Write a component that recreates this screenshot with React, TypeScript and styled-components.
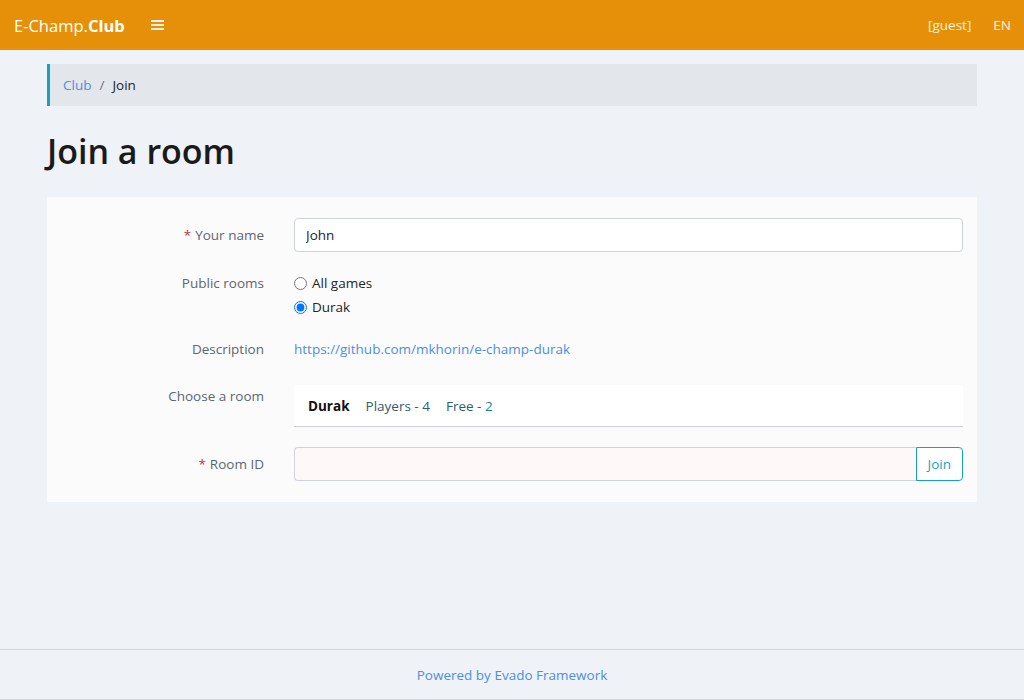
import React from "react";
import styled, { createGlobalStyle } from "styled-components";

const Global = createGlobalStyle`
  html, body { margin: 0; padding: 0; }
  body {
    background: #eff2f7;
    font-family: "Open Sans", "Noto Sans", "Liberation Sans", sans-serif;
    font-size: 13.5px;
    color: #212529;
  }
  * { box-sizing: border-box; }
`;

const Page = styled.div`
  min-height: 700px;
  display: flex;
  flex-direction: column;
`;

const NavBar = styled.header`
  height: 50px;
  background: #e69009;
  display: flex;
  align-items: center;
  padding: 0 13px 0 14px;
  color: #fff;
`;

const Brand = styled.div`
  font-size: 16.5px;
  color: #fff;
  b { font-weight: 700; }
`;

const Burger = styled.div`
  margin-left: 26px;
  width: 13px;
  display: flex;
  flex-direction: column;
  gap: 2px;
  span { display: block; height: 2px; background: #f4efe6; }
`;

const NavRight = styled.div`
  margin-left: auto;
  display: flex;
  gap: 22px;
  font-size: 13.5px;
  color: #fbf2e3;
`;

const Main = styled.main`
  flex: 1;
  padding: 14px 47px 0;
`;

const Breadcrumb = styled.nav`
  height: 42px;
  background: #e3e6ea;
  border-left: 3px solid #17a2b8;
  display: flex;
  align-items: center;
  padding-left: 13px;
  font-size: 13.5px;
  a { color: #4a90e2; text-decoration: none; }
  span.sep { color: #6c757d; margin: 0 8px; }
`;

const Title = styled.h1`
  margin: 24px 0 25px;
  font-size: 34px;
  font-weight: 600;
  line-height: 42px;
  color: #1a1a1a;
`;

const Panel = styled.section`
  background: #fbfbfc;
  padding: 21px 14px 21px 14px;
`;

const Row = styled.div<{ $mb: number }>`
  display: grid;
  grid-template-columns: 203px 1fr;
  column-gap: 30px;
  margin-bottom: ${(p) => p.$mb}px;
  &:last-child { margin-bottom: 0; }
`;

const Label = styled.label<{ $pt: number }>`
  text-align: right;
  color: #5b6673;
  padding-top: ${(p) => p.$pt}px;
  line-height: 20px;
  em { color: #c9302c; font-style: normal; margin-right: 4px; }
`;

const Input = styled.input<{ $invalid?: boolean }>`
  height: 34px;
  border: 1px solid #ced4da;
  border-radius: 4px;
  padding: 0 11px;
  font: inherit;
  color: #212529;
  background: ${(p) => (p.$invalid ? "#fff8f8" : "#fff")};
  width: 100%;
  outline: none;
`;

const Radios = styled.div`
  display: flex;
  flex-direction: column;
`;

const RadioLine = styled.label`
  display: flex;
  align-items: center;
  height: 24px;
  gap: 5px;
  input { margin: 0; width: 13px; height: 13px; }
`;

const Link = styled.a`
  color: #4a90e2;
  text-decoration: none;
  line-height: 24px;
`;

const RoomList = styled.div`
  background: #fff;
  border-bottom: 1px solid #cfd2d6;
  height: 42px;
  display: flex;
  align-items: center;
  padding: 0 14px;
  gap: 16px;
  color: #2f5d6a;
  b { color: #111; font-weight: 700; }
  span.num { color: #1e7d96; }
`;

const Group = styled.div`
  display: flex;
`;

const GroupInput = styled(Input)`
  border-radius: 4px 0 0 4px;
  border-right: none;
`;

const JoinBtn = styled.button`
  height: 34px;
  border: 1px solid #17a2b8;
  border-radius: 0 4px 4px 0;
  background: #fff;
  color: #17a2b8;
  font: inherit;
  padding: 0 11px;
`;

const Footer = styled.footer`
  height: 51px;
  border-top: 1px solid #d6d9de;
  border-bottom: 1px solid #d6d9de;
  display: flex;
  align-items: center;
  justify-content: center;
  a { color: #4a90e2; text-decoration: none; }
`;

export default function App() {
  return (
    <Page>
      <Global />
      <NavBar>
        <Brand>
          E-Champ.<b>Club</b>
        </Brand>
        <Burger>
          <span />
          <span />
          <span />
        </Burger>
        <NavRight>
          <span>[guest]</span>
          <span>EN</span>
        </NavRight>
      </NavBar>
      <Main>
        <Breadcrumb>
          <a href="#">Club</a>
          <span className="sep">/</span>
          <span>Join</span>
        </Breadcrumb>
        <Title>Join a room</Title>
        <Panel>
          <Row $mb={19}>
            <Label $pt={7}>
              <em>*</em>Your name
            </Label>
            <Input defaultValue="John" />
          </Row>
          <Row $mb={18}>
            <Label $pt={2}>Public rooms</Label>
            <Radios>
              <RadioLine>
                <input type="radio" name="r" /> All games
              </RadioLine>
              <RadioLine>
                <input type="radio" name="r" defaultChecked /> Durak
              </RadioLine>
            </Radios>
          </Row>
          <Row $mb={24}>
            <Label $pt={2}>Description</Label>
            <div>
              <Link href="#">https://github.com/mkhorin/e-champ-durak</Link>
            </div>
          </Row>
          <Row $mb={20}>
            <Label $pt={1}>Choose a room</Label>
            <RoomList>
              <b>Durak</b>
              <span>Players - 4</span>
              <span>
                Free - <span className="num">2</span>
              </span>
            </RoomList>
          </Row>
          <Row $mb={0}>
            <Label $pt={7}>
              <em>*</em>Room ID
            </Label>
            <Group>
              <GroupInput $invalid />
              <JoinBtn>Join</JoinBtn>
            </Group>
          </Row>
        </Panel>
      </Main>
      <Footer>
        <a href="#">Powered by Evado Framework</a>
      </Footer>
    </Page>
  );
}
